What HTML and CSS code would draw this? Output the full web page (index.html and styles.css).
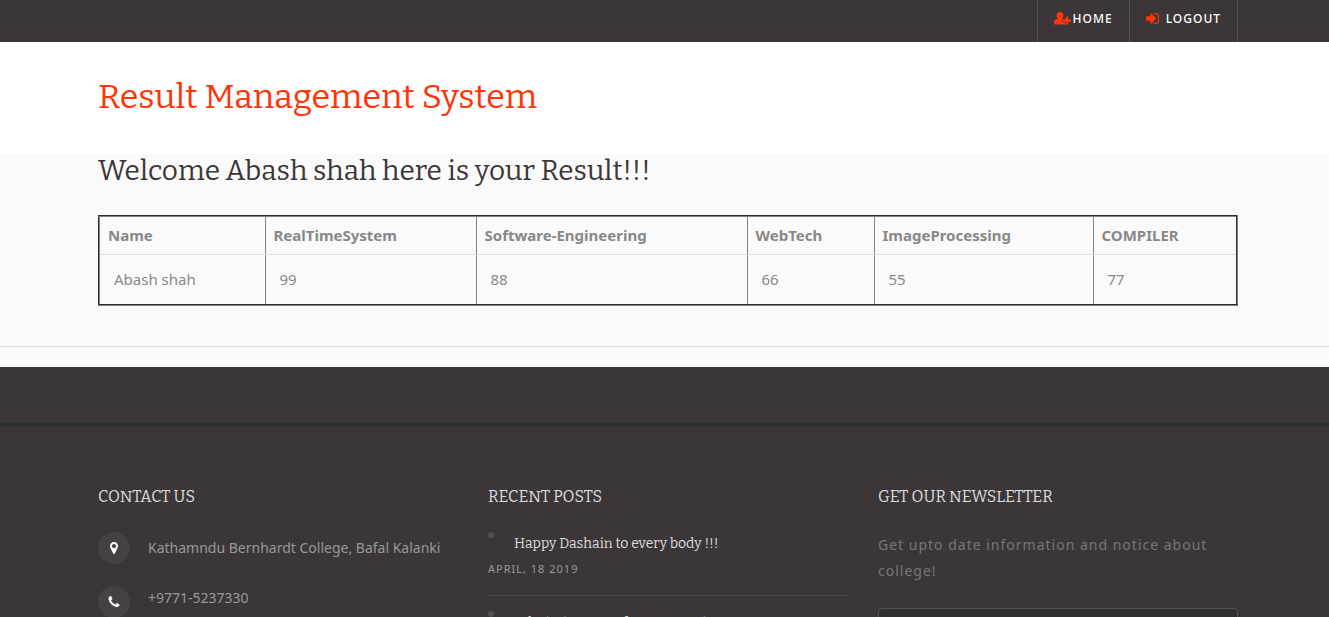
FILE: index.html
```html
<!DOCTYPE html>
<html lang="en">
<head>
<meta charset="utf-8">
<title>Result Management System</title>
<link rel="stylesheet" href="styles.css">
</head>
<body>
<nav class="topbar">
  <div class="container topbar-links">
    <a href="#home"><svg class="icon-user" viewBox="0 0 17 13" aria-hidden="true"><path d="M6 0C8 0 9.300 1.500 9.300 3.400 9.300 4.900 8.800 6 8 6.700 9.500 6.700 10.500 7 11 8V12.500H1.200C.4 12.500 0 12 0 11.200 0 8.500 1 7 4 6.700 3.200 6 2.700 4.900 2.700 3.400 2.700 1.500 4 0 6 0Z"/><path class="icon-plus" d="M11.800 4.500h2.400v2.800h2.800v2.400h-2.800v2.800h-2.400V9.700H9V7.300H11.800Z"/></svg>HOME</a>
    <a href="#logout"><svg class="icon-signin" viewBox="0 128 1536 1536" aria-hidden="true"><path d="M1184 896q0 26-19 45l-544 544q-19 19-45 19t-45-19-19-45v-288h-448q-26 0-45-19t-19-45v-384q0-26 19-45t45-19h448v-288q0-26 19-45t45-19 45 19l544 544q19 19 19 45zm352-352v704q0 119-84.500 203.500t-203.500 84.500h-320q-13 0-22.500-9.500t-9.500-22.500q0-4-1-20t-.5-26.500 3-23.500 10-19.500 20.500-6.500h320q66 0 113-47t47-113v-704q0-66-47-113t-113-47h-312l-11.500-1-11.500-3-8-5.500-7-9-2-13.500q0-4-1-20t-.5-26.500 3-23.500 10-19.500 20.500-6.500h320q119 0 203.500 84.500t84.500 203.500z"/></svg>LOGOUT</a>
  </div>
</nav>
<header class="masthead">
  <div class="container"><h1>Result Management System</h1></div>
</header>
<main class="results">
  <div class="container">
    <h2>Welcome Abash shah here is your Result!!!</h2>
    <table>
      <colgroup><col class="col-name"><col class="col-rts"><col class="col-se"><col class="col-web"><col class="col-image"><col></colgroup>
      <thead>
        <tr><th scope="col">Name</th><th scope="col">RealTimeSystem</th><th scope="col">Software-Engineering</th><th scope="col">WebTech</th><th scope="col">ImageProcessing</th><th scope="col">COMPILER</th></tr>
      </thead>
      <tbody>
        <tr><td>Abash shah</td><td>99</td><td>88</td><td>66</td><td>55</td><td>77</td></tr>
      </tbody>
    </table>
  </div>
</main>
<div class="band"></div>
<footer class="footer">
  <div class="container footer-grid">
    <section>
      <h3>CONTACT US</h3>
      <ul class="contact">
        <li><span class="badge"><svg viewBox="0 0 1792 1792" aria-hidden="true"><path d="M1152 640q0-106-75-181t-181-75-181 75-75 181 75 181 181 75 181-75 75-181zm256 0q0 109-33 179l-364 774q-16 33-47.500 52t-67.500 19-67.500-19-46.500-52l-365-774q-33-70-33-179 0-212 150-362t362-150 362 150 150 362z"/></svg></span><span>Kathamndu Bernhardt College, Bafal Kalanki</span></li>
        <li class="phone"><span class="badge"><svg viewBox="0 0 1792 1792" aria-hidden="true"><path d="M1600 1240q0 27-10 70.500t-21 68.500q-21 50-122 106-94 51-186 51-27 0-53-3.500t-57.500-12.500-47-14.500-55.500-20.500-49-18q-98-35-175-83-127-79-264-216t-216-264q-48-77-83-175-3-9-18-49t-20.500-55.500-14.500-47-12.500-57.500-3.500-53q0-92 51-186 56-101 106-122 25-11 68.500-21t70.500-10q14 0 21 3 18 6 53 76 11 19 30 54t35 63.500 31 53.500q3 4 17.500 25t21.500 35.500 7 28.500q0 20-28.500 50t-62 55-62 53-28.500 46q0 9 5 22.500t8.500 20.500 14 24 11.500 19q76 137 174 235t235 174q2 1 19 11.500t24 14 20.500 8.500 22.500 5q18 0 46-28.500t53-62 55-62 50-28.500q14 0 28.500 7t35.500 21.500 25 17.500q25 15 53.500 31t63.500 35 54 30q70 35 76 53 3 7 3 21z"/></svg></span><span>+9771-5237330</span></li>
      </ul>
    </section>
    <section>
      <h3>RECENT POSTS</h3>
      <ul class="posts">
        <li><span class="dot"></span><a href="#dashain">Happy Dashain to every body !!!</a><time datetime="2019-04-18">APRIL, 18 2019</time></li>
        <li><span class="dot"></span><a href="#admission">Admission open for new session</a></li>
      </ul>
    </section>
    <section>
      <h3>GET OUR NEWSLETTER</h3>
      <form class="newsletter">
        <p>Get upto date information and notice about college!</p>
        <input type="email" aria-label="Email address">
      </form>
    </section>
  </div>
</footer>
</body>
</html>
```
FILE: styles.css
```css
* { box-sizing: border-box; }
html, body { height: 100%; }
body {
  margin: 0;
  display: flex;
  flex-direction: column;
  overflow: hidden;
  background: #fafafa;
  color: #888;
  font-family: "Noto Sans", "Open Sans", sans-serif;
  font-size: 15px;
}
body > * { flex-shrink: 0; }
h1, h2, h3, ul, p { margin: 0; padding: 0; font-weight: 400; }
ul { list-style: none; }
h1, h2, h3, .posts a { font-family: Bitter, "Liberation Serif", serif; }
.container { padding: 0 91px 0 98px; }
svg { fill: currentColor; }

.topbar { background: #3c3639; }
.topbar-links { display: flex; justify-content: flex-end; }
.topbar a {
  display: flex;
  align-items: center;
  height: 42px;
  padding: 0 16px 6px;
  border-left: 1px solid #565053;
  color: #fff;
  font-size: 12px;
  font-weight: 500;
  letter-spacing: 1px;
  text-decoration: none;
}
.topbar a:last-child { border-right: 1px solid #565053; }
.topbar svg { color: #ff3407; }
.icon-user { width: 17px; height: 13px; margin-right: 2px; }
.icon-plus { stroke: #3c3639; stroke-width: 1; paint-order: stroke; }
.icon-signin { width: 13px; height: 13px; margin-right: 7px; }

.masthead { background: #fff; padding: 32px 0 34px; }
h1 { color: #ff3407; font-size: 34px; line-height: 46px; }

.results { padding-bottom: 40px; border-bottom: 1px solid #ddd; }
h2 { color: #3c3639; font-size: 28px; line-height: 34px; margin-bottom: 27px; }
table {
  width: 100%;
  border: 2px outset gray;
  border-collapse: collapse;
  table-layout: fixed;
}
th, td { border: 1px solid gray; text-align: left; line-height: 21px; }
th { padding: 8px; border-bottom-color: #ddd; }
td { padding: 14px; font-weight: 400; border-top-color: #ddd; }
.col-name { width: 166px; }
.col-rts { width: 211px; }
.col-se { width: 271px; }
.col-web { width: 127px; }
.col-image { width: 219px; }

.band { height: 60px; margin-top: 20px; background: #3c3639; border-bottom: 4px solid #2f2f2f; }
.footer { flex: 1 0 auto; padding-top: 60px; background: #3c3639; color: #999; }
.footer-grid { display: grid; grid-template-columns: repeat(3, 1fr); gap: 30px; }
h3 { color: #ddd; font-size: 16px; line-height: 20px; margin-bottom: 25px; }
.contact { font-size: 14px; }
.contact li { display: flex; gap: 18px; line-height: 32px; margin-bottom: 22px; }
.contact .phone { line-height: 24px; }
.badge {
  display: grid;
  place-items: center;
  width: 32px;
  height: 32px;
  border-radius: 50%;
  background: #474144;
  color: #fff;
}
.badge svg { width: 14px; height: 14px; }
.posts li {
  display: grid;
  grid-template-columns: 26px 1fr;
  padding-bottom: 13px;
  margin-bottom: 15px;
  border-bottom: 1px solid #4d484b;
}
.dot { width: 6px; height: 6px; border-radius: 50%; background: #544f52; }
.posts a { color: #ddd; font-size: 14px; line-height: 24px; text-decoration: none; }
time { grid-column: 1 / -1; font-size: 11px; line-height: 26px; letter-spacing: 1px; }
.newsletter p { color: #777; font-size: 14px; line-height: 26px; letter-spacing: 1px; }
.newsletter input {
  width: 100%;
  height: 40px;
  margin-top: 24px;
  background: #2f2f2f;
  border: 1px solid #565053;
  border-radius: 4px;
}
```
